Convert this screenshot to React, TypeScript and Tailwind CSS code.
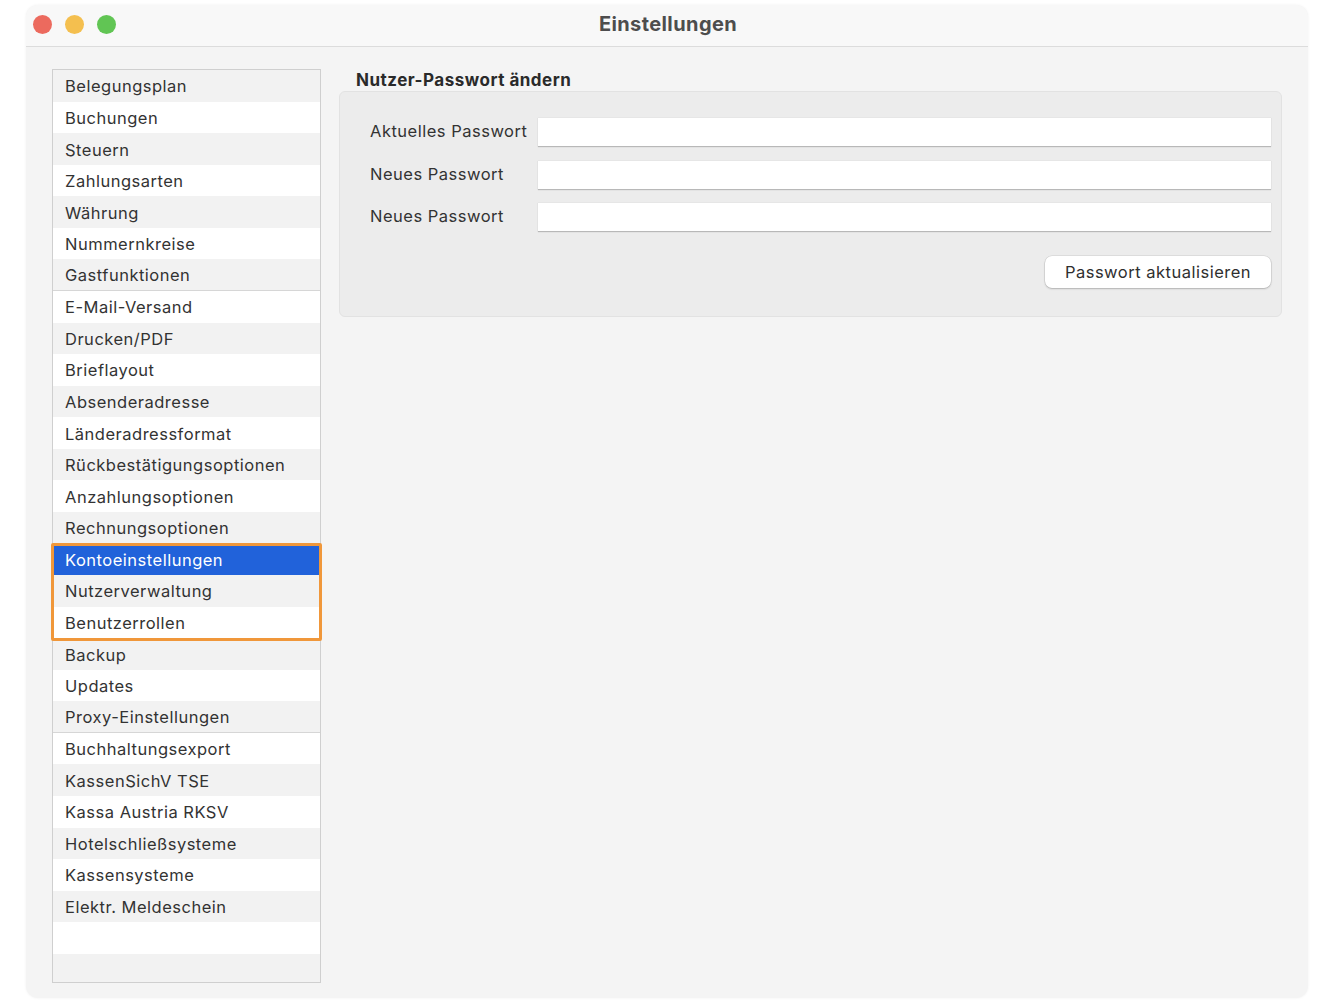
import React from "react";

// --- DATA ---
const menuItems = [
  "Belegungsplan",
  "Buchungen",
  "Steuern",
  "Zahlungsarten",
  "Währung",
  "Nummernkreise",
  "Gastfunktionen",
  "E-Mail-Versand",
  "Drucken/PDF",
  "Brieflayout",
  "Absenderadresse",
  "Länderadressformat",
  "Rückbestätigungsoptionen",
  "Anzahlungsoptionen",
  "Rechnungsoptionen",
  "Kontoeinstellungen",
  "Nutzerverwaltung",
  "Benutzerrollen",
  "Backup",
  "Updates",
  "Proxy-Einstellungen",
  "Buchhaltungsexport",
  "KassenSichV TSE",
  "Kassa Austria RKSV",
  "Hotelschließsysteme",
  "Kassensysteme",
  "Elektr. Meldeschein",
];

const selected = "Kontoeinstellungen";
const separatorsAfter = ["Gastfunktionen", "Proxy-Einstellungen"];

const fields = ["Aktuelles Passwort", "Neues Passwort", "Neues Passwort"];

export default function App() {
  return (
    <div
      className="w-[1340px] h-[1005px] bg-white pt-[5px] pl-[26px] text-[#333333]"
      style={{ fontFamily: "Inter, 'Noto Sans', sans-serif" }}
    >
      <div className="w-[1282px] h-[993px] rounded-[12px] bg-[#f4f4f4] overflow-hidden flex flex-col shadow-[0_0_3px_rgba(0,0,0,0.06)]">
        {/* --- TITLE BAR --- */}
        <div className="relative h-[42px] shrink-0 bg-[#f8f8f8] border-b border-[#dcdcdc] flex items-center pl-[7px]">
          <div className="flex gap-[13px] -mt-[3px]">
            <span className="w-[19px] h-[19px] rounded-full bg-[#ec6a5e]" />
            <span className="w-[19px] h-[19px] rounded-full bg-[#f4bf4f]" />
            <span className="w-[19px] h-[19px] rounded-full bg-[#61c554]" />
          </div>
          <div className="absolute inset-0 flex items-center justify-center -mt-[4px] pl-[2px] text-[20px] font-bold text-[#4d4d4d] tracking-[0.4px]">
            Einstellungen
          </div>
        </div>

        {/* --- BODY --- */}
        <div className="flex-1 flex pt-[22px] pl-[26px] pr-[26px] pb-[15px] gap-[18px]">
          {/* Sidebar list */}
          <div className="relative w-[269px] border border-[#cfcfcf] bg-[#f2f2f2] flex flex-col">
            {menuItems.map((item, idx) => {
              const isSel = item === selected;
              const sep = separatorsAfter.includes(item);
              return (
                <div
                  key={item}
                  className={`h-[31.57px] shrink-0 flex items-center pl-[12px] pt-[2px] text-[16.5px] tracking-[0.5px] ${
                    isSel
                      ? "bg-[#2162da] text-white"
                      : idx % 2 === 0
                      ? "bg-[#f2f2f2]"
                      : "bg-white"
                  } ${sep ? "border-b border-[#d6d6d6]" : ""}`}
                >
                  {item}
                </div>
              );
            })}
            <div className="h-[31.57px] shrink-0 bg-white" />
            <div className="flex-1 bg-[#f2f2f2]" />

            {/* Highlight overlay */}
            <div className="absolute left-[-2px] right-[-2px] top-[473px] h-[98px] border-[3px] border-[#f0973a] rounded-[2px] pointer-events-none" />
          </div>

          {/* Right panel */}
          <div className="flex-1 flex flex-col">
            <h2 className="pl-[17px] pt-[1px] text-[17px] font-bold text-[#2a2a2a] leading-[20px] h-[22px] tracking-[0.5px]">
              Nutzer-Passwort ändern
            </h2>
            <div className="h-[226px] rounded-[6px] bg-[#ececec] border border-[#e2e2e2] pt-[25px] pl-[30px] pr-[10px]">
              <div className="flex flex-col gap-[13.5px]">
                {fields.map((label, idx) => (
                  <div key={idx} className="flex items-center h-[29px]">
                    <span className="w-[168px] text-[16.5px] tracking-[0.5px]">{label}</span>
                    <div className="flex-1 h-[29px] bg-white border-t border-[#e6e6e6] shadow-[0_1px_1px_rgba(0,0,0,0.22)]" />
                  </div>
                ))}
              </div>
              <div className="flex justify-end mt-[25px]">
                <button className="w-[226px] h-[32px] rounded-[7px] bg-white text-[16.5px] text-[#2f2f2f] tracking-[0.5px] shadow-[0_0_0_0.5px_rgba(0,0,0,0.12),0_1px_2px_rgba(0,0,0,0.2)]">
                  Passwort aktualisieren
                </button>
              </div>
            </div>
          </div>
        </div>
      </div>
    </div>
  );
}
